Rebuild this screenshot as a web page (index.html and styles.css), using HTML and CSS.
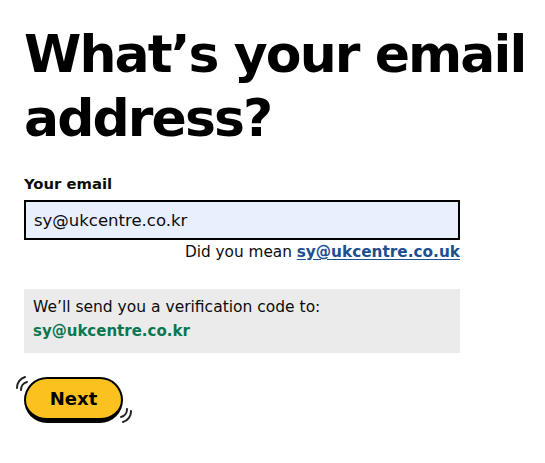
FILE: index.html
```html
<!DOCTYPE html>
<html lang="en">
<head>
<meta charset="utf-8">
<title>What's your email address?</title>
<link rel="stylesheet" href="styles.css">
</head>
<body>
<main class="page">
  <h1 class="title">What’s your email address?</h1>
  <form class="form">
    <label class="label" for="email">Your email</label>
    <input class="input" id="email" type="email" value="sy@ukcentre.co.kr">
    <p class="suggest">Did you mean <a class="suggest-link" href="#">sy@ukcentre.co.uk</a></p>
    <div class="notice">
      <p class="notice-text">We’ll send you a verification code to:</p>
      <p class="notice-email">sy@ukcentre.co.kr</p>
    </div>
    <div class="actions">
      <button class="btn" type="button">
        <svg class="wiggle wiggle-tl" width="20" height="20" viewBox="0 0 20 20" fill="none" stroke="#222" stroke-width="2" stroke-linecap="round">
          <path d="M3 15 A11 11 0 0 1 11 4"/>
          <path d="M7 17 A8 8 0 0 1 13 9"/>
        </svg>
        Next
        <svg class="wiggle wiggle-br" width="20" height="20" viewBox="0 0 20 20" fill="none" stroke="#222" stroke-width="2" stroke-linecap="round">
          <path d="M17 5 A11 11 0 0 1 9 16"/>
          <path d="M13 3 A8 8 0 0 1 7 11"/>
        </svg>
      </button>
    </div>
  </form>
</main>
</body>
</html>
```
FILE: styles.css
```css
* { box-sizing: border-box; }
body {
  margin: 0;
  background: #fff;
  color: #0b0c0c;
  font-family: "DejaVu Sans", "Noto Sans", sans-serif;
}
.page {
  padding: 22px 0 0 24px;
}
.title {
  margin: 0 0 24px;
  font-size: 52px;
  line-height: 64px;
  font-weight: 700;
  letter-spacing: -1.9px;
  color: #000;
}
.form {
  display: flex;
  flex-direction: column;
  width: 436px;
}
.label {
  font-size: 14.8px;
  font-weight: 700;
  line-height: 20px;
  margin-bottom: 6px;
}
.input {
  width: 436px;
  height: 40px;
  border: 2px solid #000;
  background: #e8effd;
  padding: 0 8px;
  font-family: inherit;
  font-size: 16.5px;
  color: #0b0c0c;
  outline: none;
}
.suggest {
  margin: 1px 0 0;
  text-align: right;
  font-size: 15.3px;
  line-height: 22px;
}
.suggest-link {
  color: #1d4f91;
  font-weight: 700;
  text-decoration: underline;
  text-underline-offset: 2px;
}
.notice {
  margin-top: 26px;
  background: #ebebeb;
  padding: 6px 9px 10px;
  height: 64px;
}
.notice-text {
  margin: 0;
  font-size: 15.5px;
  line-height: 24px;
}
.notice-email {
  margin: 0;
  font-size: 15px;
  line-height: 24px;
  font-weight: 700;
  color: #0a7750;
}
.actions {
  margin-top: 24px;
  display: flex;
}
.btn {
  position: relative;
  width: 99px;
  height: 46px;
  border: 2px solid #000;
  border-bottom-width: 5px;
  border-radius: 24px;
  background: #fbc21f;
  font-family: inherit;
  font-size: 18px;
  font-weight: 700;
  color: #000;
  padding: 0;
  cursor: pointer;
}
.wiggle {
  position: absolute;
}
.wiggle-tl { left: -12px; top: -6px; }
.wiggle-br { right: -13px; bottom: -8px; }
```
